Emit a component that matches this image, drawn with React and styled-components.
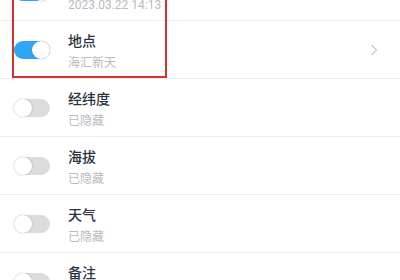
import React, { useState } from "react";
import styled, { createGlobalStyle } from "styled-components";

const GlobalStyle = createGlobalStyle`
  html, body {
    margin: 0;
    padding: 0;
    background: #ffffff;
    overflow: hidden;
  }
  body {
    font-family: "Noto Sans CJK SC", "Noto Sans", sans-serif;
  }
`;

const items = [
  { id: "time", title: "时间", sub: "2023.03.22 14:13", on: true },
  { id: "place", title: "地点", sub: "海汇新天", on: true, arrow: true },
  { id: "coord", title: "经纬度", sub: "已隐藏", on: false },
  { id: "alt", title: "海拔", sub: "已隐藏", on: false },
  { id: "weather", title: "天气", sub: "已隐藏", on: false },
  { id: "note", title: "备注", sub: "已隐藏", on: false },
];

function App() {
  const [state, setState] = useState(
    Object.fromEntries(items.map((it) => [it.id, it.on]))
  );

  const toggle = (id) => {
    setState({ ...state, [id]: !state[id] });
  };

  const renderRow = (it) => (
    <Row key={it.id}>
      <Switch $on={state[it.id]} onClick={() => toggle(it.id)} />
      <Texts>
        <Title>{it.title}</Title>
        <Sub>{it.sub}</Sub>
      </Texts>
      {it.arrow && (
        <Chevron viewBox="0 0 8 12" width="8" height="12">
          <polyline
            points="1.5,1 6.5,6 1.5,11"
            fill="none"
            stroke="#c9cbce"
            strokeWidth="1.2"
          />
        </Chevron>
      )}
    </Row>
  );

  return (
    <>
      <GlobalStyle />
      <List>
        <Highlight>{items.slice(0, 2).map(renderRow)}</Highlight>
        {items.slice(2).map(renderRow)}
      </List>
    </>
  );
}

export default App;

const List = styled.div`
  margin-top: -37px;
  display: flex;
  flex-direction: column;
`;

const Highlight = styled.div`
  position: relative;

  &::after {
    content: "";
    position: absolute;
    left: 12px;
    width: 155px;
    top: 0;
    bottom: 1px;
    border: 2px solid #d9312b;
    box-sizing: border-box;
    pointer-events: none;
  }
`;

const Row = styled.div`
  height: 58px;
  box-sizing: border-box;
  border-bottom: 1px solid #efefef;
  display: flex;
  align-items: center;
  padding: 0 22px 0 14px;
`;

const Switch = styled.div`
  position: relative;
  width: 36px;
  height: 18px;
  border-radius: 9px;
  background: ${(p) => (p.$on ? "#2ea6f4" : "#dcdcdc")};
  flex-shrink: 0;
  cursor: pointer;

  &::after {
    content: "";
    position: absolute;
    top: 0;
    left: ${(p) => (p.$on ? "18px" : "0")};
    width: 18px;
    height: 18px;
    border-radius: 50%;
    background: #ffffff;
    box-shadow: 0 0 2px rgba(0, 0, 0, 0.25);
  }
`;

const Texts = styled.div`
  flex: 1;
  display: flex;
  flex-direction: column;
  gap: 6px;
  margin-left: 18px;
  padding-top: 2px;
`;

const Title = styled.div`
  font-size: 14px;
  line-height: 18px;
  color: #2b3440;
  font-weight: 500;
`;

const Sub = styled.div`
  font-family: Roboto, "Noto Sans CJK SC", sans-serif;
  font-size: 12px;
  line-height: 16px;
  color: #b7bbc2;
`;

const Chevron = styled.svg`
  flex-shrink: 0;
`;
